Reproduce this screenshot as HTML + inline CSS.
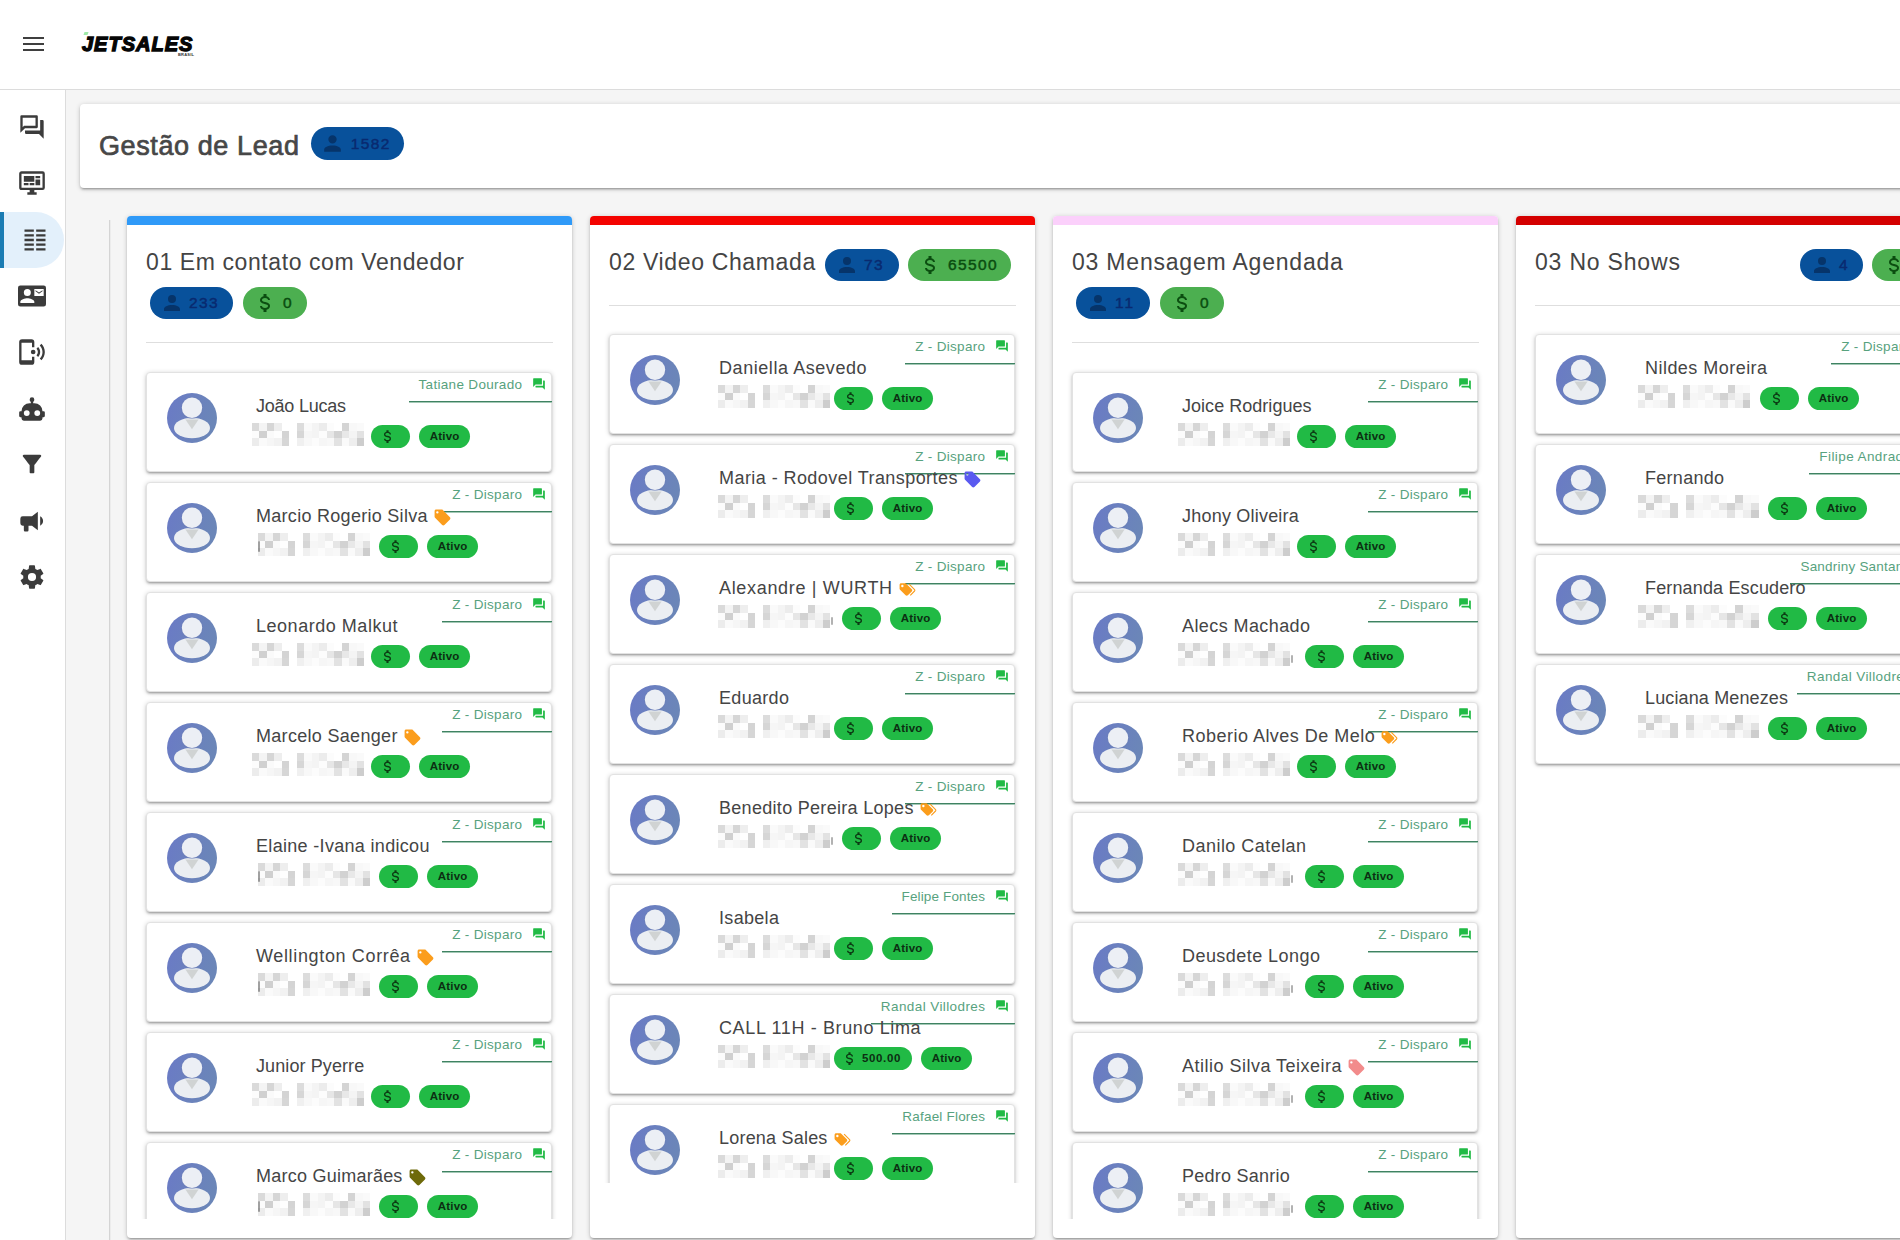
<!DOCTYPE html>
<html lang="pt-BR"><head><meta charset="utf-8"><title>Gestão de Lead</title>
<style>
*{box-sizing:border-box}
html,body{margin:0;padding:0;width:1900px;height:1240px;overflow:hidden}
body{background:#f5f5f5;font-family:"Liberation Sans",sans-serif;color:#444}
#app{position:absolute;left:0;top:0;width:1900px;height:1240px;overflow:hidden;background:#f5f5f5}
.ic{display:block;flex:none;fill:currentColor}
#hdr{position:absolute;left:0;top:0;width:1900px;height:90px;background:#fff;border-bottom:1px solid #dcdcdc}
#menu{position:absolute;left:23px;top:37px;width:21px;height:15px}
#menu i{position:absolute;left:0;width:21px;height:2px;background:#3f3f3f}
#logo{position:absolute;left:82px;top:30px;height:28px;font:italic bold 20px/28px "Liberation Sans",sans-serif;color:#060606;letter-spacing:1.0px;-webkit-text-stroke:1.3px #060606;white-space:nowrap}
#logo2{position:absolute;left:178px;top:53px;font:bold 4px/4px "Liberation Sans",sans-serif;color:#333;letter-spacing:.2px}
#logodot{position:absolute;left:84px;top:32px;width:4px;height:3px;background:#7fe38a;transform:skewX(-20deg);opacity:.75}
#side{position:absolute;left:0;top:90px;width:66px;height:1150px;background:#fff;border-right:1px solid #dcdcdc}
#side .it{position:absolute;left:0;width:65px;height:56px}
#side .it svg{position:absolute;left:18px;top:14px}
#side .act{background:#e3f0fb;border-radius:0 28px 28px 0;border-left:4px solid #1b7cb3;width:64px}
#side .act svg{left:17px}
#tcard{position:absolute;left:80px;top:104px;width:1840px;height:84px;background:#fff;border-radius:4px;box-shadow:0 1px 5px rgba(0,0,0,.2),0 2px 2px rgba(0,0,0,.14),0 3px 1px -2px rgba(0,0,0,.12)}
#ttl{position:absolute;left:19px;top:22px;font:27px/40px "Liberation Sans",sans-serif;color:#474747;white-space:nowrap;-webkit-text-stroke:.7px #474747}
.bd{position:absolute;height:32px;border-radius:16px;display:flex;align-items:center;white-space:nowrap;font-size:15.5px;line-height:32px}
.bd.b{background:#08519b;color:#092a70;-webkit-text-stroke:.45px #092a70}
.bd.g{background:#4caf50;color:#0a4d0f;-webkit-text-stroke:.45px #0a4d0f}
#vline{position:absolute;left:109px;top:220px;width:1px;height:1020px;background:#d4d4d4;box-shadow:1px 0 0 #ececec}
.col{position:absolute;top:216px;width:445px;height:1022px;background:#fff;border-radius:4px;box-shadow:0 1px 5px rgba(0,0,0,.2),0 2px 2px rgba(0,0,0,.14),0 3px 1px -2px rgba(0,0,0,.12);overflow:hidden}
.col .bar{position:absolute;left:0;top:0;width:100%;height:9px}
.col .ct{position:absolute;left:19px;top:27px;font-size:23px;line-height:38px;color:#444;white-space:nowrap}
.col .hr{position:absolute;left:19px;width:407px;height:1px;background:#dedede}
.list{position:absolute;left:0;width:445px;overflow:hidden}
.card{position:absolute;left:19px;width:406px;height:100px;background:#fff;border:1px solid #e2e2e2;border-radius:4px;box-shadow:0 1px 5px rgba(0,0,0,.2),0 2px 2px rgba(0,0,0,.14),0 3px 1px -2px rgba(0,0,0,.12)}
.av{position:absolute;left:20px;top:20px;width:50px;height:50px}
.nm{position:absolute;left:109px;top:21px;font-size:18px;line-height:24px;color:#454545;white-space:nowrap;display:flex;align-items:center;z-index:2}
.nm svg{margin-left:5.5px;margin-top:2px}
.ow{position:absolute;right:-1px;top:-1px;height:31px;padding:0 6px 6px 10px;background:linear-gradient(#3f8262,#3f8262 50%,#a3c9b6 50%) left bottom/100% 2px no-repeat;font-size:13.5px;line-height:23px;color:#57a27e;white-space:nowrap;display:flex;align-items:center}
.ow svg{margin-left:10px;margin-top:-1px}
.ph{position:absolute;left:105px;top:50px;width:112px;height:23px}
.mk{position:absolute;top:58px;width:2px;height:11px;background:#555;opacity:.55;border-radius:1px}
.pl{position:absolute;top:52px;height:23px;border-radius:12px;background:#21ba45;display:flex;align-items:center;font:bold 11.5px/23px "Liberation Sans",sans-serif;color:#0c2e12;white-space:nowrap}
</style></head><body><div id="app">
<svg width="0" height="0" style="position:absolute"><defs><linearGradient id="ag" x1="0" x2="1" y1="0" y2="0.3"><stop offset="0" stop-color="#6a7ac6"/><stop offset="1" stop-color="#6b86b8"/></linearGradient><symbol id="i-menu" viewBox="0 0 24 24"><path d="M3,6H21V8H3V6M3,11H21V13H3V11M3,16H21V18H3V16Z"/></symbol><symbol id="i-forum_o" viewBox="0 0 24 24"><path d="M15,4V11H5.17L4,12.17V4H15M16,2H3A1,1 0 0,0 2,3V17L6,13H16A1,1 0 0,0 17,12V3A1,1 0 0,0 16,2M21,6H19V15H6V17A1,1 0 0,0 7,18H18L22,22V7A1,1 0 0,0 21,6Z"/></symbol><symbol id="i-forum" viewBox="0 0 24 24"><path d="M17,12V3A1,1 0 0,0 16,2H3A1,1 0 0,0 2,3V17L6,13H16A1,1 0 0,0 17,12M21,6H19V15H6V17A1,1 0 0,0 7,18H18L22,22V7A1,1 0 0,0 21,6Z"/></symbol><symbol id="i-monitor" viewBox="0 0 24 24"><path d="M21,16V4H3V16H21M21,2A2,2 0 0,1 23,4V16A2,2 0 0,1 21,18H14V20H16V22H8V20H10V18H3C1.89,18 1,17.1 1,16V4C1,2.89 1.89,2 3,2H21M5,6H14V11H5V6M15,6H19V8H15V6M19,9V14H15V9H19M5,12H9V14H5V12M10,12H14V14H10V12Z"/></symbol><symbol id="i-columns" viewBox="0 0 24 24"><path d="M3,3H11V5H3V3M13,3H21V5H13V3M3,7H11V9H3V7M13,7H21V9H13V7M3,11H11V13H3V11M13,11H21V13H13V11M3,15H11V17H3V15M13,15H21V17H13V15M3,19H11V21H3V19M13,19H21V21H13V19Z"/></symbol><symbol id="i-cardmail" viewBox="0 0 24 24"><path d="M21,8V7L18,9L15,7V8L18,10M22,3H2A2,2 0 0,0 0,5V19A2,2 0 0,0 2,21H22A2,2 0 0,0 24,19V5A2,2 0 0,0 22,3M8,6A3,3 0 0,1 11,9A3,3 0 0,1 8,12A3,3 0 0,1 5,9A3,3 0 0,1 8,6M14,18H2V17C2,15 6,13.9 8,13.9C10,13.9 14,15 14,17M22,12H14V6H22"/></symbol><symbol id="i-cellwifi" viewBox="0 0 24 24"><path d="M20.07,4.93C21.88,6.74 23,9.24 23,12C23,14.76 21.88,17.26 20.07,19.07L18.66,17.66C20.11,16.22 21,14.22 21,12C21,9.79 20.11,7.78 18.66,6.34L20.07,4.93M17.24,7.76C18.33,8.85 19,10.35 19,12C19,13.65 18.33,15.15 17.24,16.24L15.83,14.83C16.55,14.11 17,13.11 17,12C17,10.89 16.55,9.89 15.83,9.17L17.24,7.76M13,10A2,2 0 0,1 15,12A2,2 0 0,1 13,14A2,2 0 0,1 11,12A2,2 0 0,1 13,10M11.5,1A2.5,2.5 0 0,1 14,3.5V8H12V4H3V19H12V16H14V20.5A2.5,2.5 0 0,1 11.5,23H3.5A2.5,2.5 0 0,1 1,20.5V3.5A2.5,2.5 0 0,1 3.5,1H11.5Z"/></symbol><symbol id="i-robot" viewBox="0 0 24 24"><path d="M12,2A2,2 0 0,1 14,4C14,4.74 13.6,5.39 13,5.73V7H14A7,7 0 0,1 21,14H22A1,1 0 0,1 23,15V18A1,1 0 0,1 22,19H21V20A2,2 0 0,1 19,22H5A2,2 0 0,1 3,20V19H2A1,1 0 0,1 1,18V15A1,1 0 0,1 2,14H3A7,7 0 0,1 10,7H11V5.73C10.4,5.39 10,4.74 10,4A2,2 0 0,1 12,2M7.5,13A2.5,2.5 0 0,0 5,15.5A2.5,2.5 0 0,0 7.5,18A2.5,2.5 0 0,0 10,15.5A2.5,2.5 0 0,0 7.5,13M16.5,13A2.5,2.5 0 0,0 14,15.5A2.5,2.5 0 0,0 16.5,18A2.5,2.5 0 0,0 19,15.5A2.5,2.5 0 0,0 16.5,13Z"/></symbol><symbol id="i-filter" viewBox="0 0 24 24"><path d="M4.25,5.61C6.27,8.2 10,13 10,13v6c0,0.55 0.45,1 1,1h2c0.55,0 1,-0.45 1,-1v-6c0,0 3.72,-4.8 5.74,-7.39C20.25,4.95 19.78,4 18.95,4H5.04C4.21,4 3.74,4.95 4.25,5.61z"/></symbol><symbol id="i-bullhorn" viewBox="0 0 24 24"><path d="M12,8H4A2,2 0 0,0 2,10V14A2,2 0 0,0 4,16H5V20A1,1 0 0,0 6,21H8A1,1 0 0,0 9,20V16H12L17,20V4L12,8M21.5,12C21.5,13.71 20.54,15.26 19,16V8C20.53,8.75 21.5,10.3 21.5,12Z"/></symbol><symbol id="i-cog" viewBox="0 0 24 24"><path d="M12,15.5A3.5,3.5 0 0,1 8.5,12A3.5,3.5 0 0,1 12,8.5A3.5,3.5 0 0,1 15.5,12A3.5,3.5 0 0,1 12,15.5M19.43,12.97C19.47,12.65 19.5,12.33 19.5,12C19.5,11.67 19.47,11.34 19.43,11L21.54,9.37C21.73,9.22 21.78,8.95 21.66,8.73L19.66,5.27C19.54,5.05 19.27,4.96 19.05,5.05L16.56,6.05C16.04,5.66 15.5,5.32 14.87,5.07L14.5,2.42C14.46,2.18 14.25,2 14,2H10C9.75,2 9.54,2.18 9.5,2.42L9.13,5.07C8.5,5.32 7.96,5.66 7.44,6.05L4.95,5.05C4.73,4.96 4.46,5.05 4.34,5.27L2.34,8.73C2.21,8.95 2.27,9.22 2.46,9.37L4.57,11C4.53,11.34 4.5,11.67 4.5,12C4.5,12.33 4.53,12.65 4.57,12.97L2.46,14.63C2.27,14.78 2.21,15.05 2.34,15.27L4.34,18.73C4.46,18.95 4.73,19.03 4.95,18.95L7.44,17.94C7.96,18.34 8.5,18.68 9.13,18.93L9.5,21.58C9.54,21.82 9.75,22 10,22H14C14.25,22 14.46,21.82 14.5,21.58L14.87,18.93C15.5,18.67 16.04,18.34 16.56,17.94L19.05,18.95C19.27,19.03 19.54,18.95 19.66,18.73L21.66,15.27C21.78,15.05 21.73,14.78 21.54,14.63L19.43,12.97Z"/></symbol><symbol id="i-account" viewBox="0 0 24 24"><path d="M12,4A4,4 0 0,1 16,8A4,4 0 0,1 12,12A4,4 0 0,1 8,8A4,4 0 0,1 12,4M12,14C16.42,14 20,15.79 20,18V20H4V18C4,15.79 7.58,14 12,14Z"/></symbol><symbol id="i-usd" viewBox="0 0 24 24"><path d="M7,15H9C9,16.08 10.37,17 12,17C13.63,17 15,16.08 15,15C15,13.9 13.96,13.5 11.76,12.97C9.64,12.44 7,11.78 7,9C7,7.21 8.47,5.69 10.5,5.18V3H13.5V5.18C15.53,5.69 17,7.21 17,9H15C15,7.92 13.63,7 12,7C10.37,7 9,7.92 9,9C9,10.1 10.04,10.5 12.24,11.03C14.36,11.56 17,12.22 17,15C17,16.79 15.53,18.31 13.5,18.82V21H10.5V18.82C8.47,18.31 7,16.79 7,15Z"/></symbol><symbol id="i-tag" viewBox="0 0 24 24"><path d="M5.5,7A1.5,1.5 0 0,1 4,5.5A1.5,1.5 0 0,1 5.5,4A1.5,1.5 0 0,1 7,5.5A1.5,1.5 0 0,1 5.5,7M21.41,11.58L12.41,2.58C12.05,2.22 11.55,2 11,2H4C2.89,2 2,2.89 2,4V11C2,11.55 2.22,12.05 2.59,12.41L11.58,21.41C11.95,21.77 12.45,22 13,22C13.55,22 14.05,21.77 14.41,21.41L21.41,14.41C21.78,14.05 22,13.55 22,13C22,12.44 21.77,11.94 21.41,11.58Z"/></symbol><symbol id="i-tags" viewBox="0 0 24 24"><path d="M5.5,9A1.5,1.5 0 0,0 7,7.5A1.5,1.5 0 0,0 5.5,6A1.5,1.5 0 0,0 4,7.5A1.5,1.5 0 0,0 5.5,9M17.41,11.58C17.77,11.94 18,12.44 18,13C18,13.55 17.78,14.05 17.41,14.41L12.41,19.41C12.05,19.77 11.55,20 11,20C10.45,20 9.95,19.78 9.58,19.41L2.59,12.42C2.22,12.05 2,11.55 2,11V6C2,4.89 2.89,4 4,4H9C9.55,4 10.05,4.22 10.41,4.58L17.41,11.58M13.54,5.71L14.54,4.71L21.41,11.58C21.78,11.94 22,12.45 22,13C22,13.55 21.78,14.05 21.42,14.41L16.04,19.79L15.04,18.79L20.75,13L13.54,5.71Z"/></symbol><symbol id="avatar" viewBox="0 0 50 50"><circle cx="25" cy="25" r="25" fill="url(#ag)"/><ellipse cx="25" cy="35" rx="18" ry="10.2" fill="#ebeef2"/><path d="M18.4 26.6 L31.6 26.6 L25 36.3Z" fill="#d0d3d3"/><circle cx="25" cy="15" r="11" fill="#6d7fb6" opacity=".55"/><circle cx="25" cy="14.8" r="10.2" fill="#eceff5"/></symbol><symbol id="phone" viewBox="0 0 112 23" preserveAspectRatio="none"><rect x="0.00" y="0.00" width="7.5" height="7.7" fill="#dadada"/><rect x="7.47" y="0.00" width="7.5" height="7.7" fill="#f4f4f4"/><rect x="14.93" y="0.00" width="7.5" height="7.7" fill="#d6d6d6"/><rect x="22.40" y="0.00" width="7.5" height="7.7" fill="#eeeeee"/><rect x="44.80" y="0.00" width="7.5" height="7.7" fill="#dcdcdc"/><rect x="52.27" y="0.00" width="7.5" height="7.7" fill="#fafafa"/><rect x="59.74" y="0.00" width="7.5" height="7.7" fill="#f4f4f4"/><rect x="67.20" y="0.00" width="7.5" height="7.7" fill="#ececec"/><rect x="74.67" y="0.00" width="7.5" height="7.7" fill="#fcfcfc"/><rect x="89.60" y="0.00" width="7.5" height="7.7" fill="#d4d4d4"/><rect x="97.07" y="0.00" width="7.5" height="7.7" fill="#f8f8f8"/><rect x="104.54" y="0.00" width="7.5" height="7.7" fill="#fafafa"/><rect x="0.00" y="7.67" width="7.5" height="7.7" fill="#fcfcfc"/><rect x="7.47" y="7.67" width="7.5" height="7.7" fill="#d0d0d0"/><rect x="14.93" y="7.67" width="7.5" height="7.7" fill="#fafafa"/><rect x="22.40" y="7.67" width="7.5" height="7.7" fill="#fefefe"/><rect x="29.87" y="7.67" width="7.5" height="7.7" fill="#d4d4d4"/><rect x="44.80" y="7.67" width="7.5" height="7.7" fill="#d6d6d6"/><rect x="52.27" y="7.67" width="7.5" height="7.7" fill="#f6f6f6"/><rect x="59.74" y="7.67" width="7.5" height="7.7" fill="#f4f4f4"/><rect x="67.20" y="7.67" width="7.5" height="7.7" fill="#fcfcfc"/><rect x="74.67" y="7.67" width="7.5" height="7.7" fill="#e6e6e6"/><rect x="82.14" y="7.67" width="7.5" height="7.7" fill="#d2d2d2"/><rect x="89.60" y="7.67" width="7.5" height="7.7" fill="#e8e8e8"/><rect x="97.07" y="7.67" width="7.5" height="7.7" fill="#f4f4f4"/><rect x="104.54" y="7.67" width="7.5" height="7.7" fill="#e2e2e2"/><rect x="0.00" y="15.34" width="7.5" height="7.7" fill="#ececec"/><rect x="7.47" y="15.34" width="7.5" height="7.7" fill="#fafafa"/><rect x="14.93" y="15.34" width="7.5" height="7.7" fill="#f6f6f6"/><rect x="22.40" y="15.34" width="7.5" height="7.7" fill="#f2f2f2"/><rect x="29.87" y="15.34" width="7.5" height="7.7" fill="#d6d6d6"/><rect x="44.80" y="15.34" width="7.5" height="7.7" fill="#f0f0f0"/><rect x="52.27" y="15.34" width="7.5" height="7.7" fill="#f8f8f8"/><rect x="59.74" y="15.34" width="7.5" height="7.7" fill="#fcfcfc"/><rect x="67.20" y="15.34" width="7.5" height="7.7" fill="#f6f6f6"/><rect x="74.67" y="15.34" width="7.5" height="7.7" fill="#f8f8f8"/><rect x="82.14" y="15.34" width="7.5" height="7.7" fill="#e2e2e2"/><rect x="89.60" y="15.34" width="7.5" height="7.7" fill="#fafafa"/><rect x="97.07" y="15.34" width="7.5" height="7.7" fill="#eeeeee"/><rect x="104.54" y="15.34" width="7.5" height="7.7" fill="#cdcdcd"/></symbol></defs></svg>
<div id="hdr"><div id="menu"><i style="top:0"></i><i style="top:6px"></i><i style="top:12px;height:2.4px"></i></div>
<div id="logodot"></div><div id="logo">JETSALES</div><div id="logo2">BRASIL</div></div>
<div id="side"><div class="it" style="top:9px"><svg class="ic" width="28" height="28" style="color:#3b3b3b;"><use href="#i-forum_o"/></svg></div><div class="it" style="top:65px"><svg class="ic" width="28" height="28" style="color:#3b3b3b;"><use href="#i-monitor"/></svg></div><div class="it act" style="top:122px"><svg class="ic" width="28" height="28" style="color:#3b3b3b;"><use href="#i-columns"/></svg></div><div class="it" style="top:178px"><svg class="ic" width="28" height="28" style="color:#3b3b3b;"><use href="#i-cardmail"/></svg></div><div class="it" style="top:234px"><svg class="ic" width="28" height="28" style="color:#3b3b3b;"><use href="#i-cellwifi"/></svg></div><div class="it" style="top:291px"><svg class="ic" width="28" height="28" style="color:#3b3b3b;"><use href="#i-robot"/></svg></div><div class="it" style="top:346px"><svg class="ic" width="28" height="28" style="color:#3b3b3b;"><use href="#i-filter"/></svg></div><div class="it" style="top:403px"><svg class="ic" width="28" height="28" style="color:#3b3b3b;"><use href="#i-bullhorn"/></svg></div><div class="it" style="top:459px"><svg class="ic" width="28" height="28" style="color:#3b3b3b;"><use href="#i-cog"/></svg></div></div>
<div id="tcard"><div id="ttl"><span style="letter-spacing:0.599px;margin-right:-0.599px">Gestão de Lead</span></div>
<div class="bd b" style="left:231px;top:23px;width:93px;height:33px;border-radius:17px;padding-left:8.8px"><svg class="ic" width="25" height="25" style="color:#06346a;"><use href="#i-account"/></svg><span style="margin-left:6px"><span style="letter-spacing:1.365px;margin-right:-1.365px">1582</span></span></div></div>
<div id="vline"></div>
<div class="col" style="left:127px"><div class="bar" style="background:#2f9af8"></div><div class="ct"><span style="letter-spacing:0.594px;margin-right:-0.594px">01 Em contato com Vendedor</span></div><div class="bd b" style="left:23px;top:71px;width:83px;padding-left:9.7px"><svg class="ic" width="24" height="24" style="color:#06346a;"><use href="#i-account"/></svg><span style="margin-left:5.3px"><span style="letter-spacing:1.363px;margin-right:-1.363px">233</span></span></div><div class="bd g" style="left:116px;top:71px;width:64px;padding-left:9.7px"><svg class="ic" width="24" height="24" style="color:#0b4d10;"><use href="#i-usd"/></svg><span style="margin-left:6.3px"><span style="letter-spacing:1.369px;margin-right:-1.369px">0</span></span></div><div class="hr" style="top:126px"></div><div class="list" style="top:152px;height:851px"><div class="card" style="top:4px"><svg class="av"><use href="#avatar"/></svg><div class="ow"><span style="letter-spacing:0.314px;margin-right:-0.314px">Tatiane Dourado</span><svg class="ic" width="14" height="14" style="color:#21ba45;"><use href="#i-forum"/></svg></div><div class="nm"><span style="letter-spacing:-0.218px;margin-right:0.218px">João Lucas</span></div><svg class="ph" style="left:105px;width:112px" shape-rendering="crispEdges"><use href="#phone"/></svg><div class="pl" style="left:224px;width:39px;padding-left:7.7px"><svg class="ic" width="17" height="17" style="color:#0c3d14;"><use href="#i-usd"/></svg></div><div class="pl" style="left:272px;width:51px;justify-content:center"><span style="letter-spacing:0.191px;margin-right:-0.191px">Ativo</span></div></div><div class="card" style="top:114px"><svg class="av"><use href="#avatar"/></svg><div class="ow"><span style="letter-spacing:0.301px;margin-right:-0.301px">Z - Disparo</span><svg class="ic" width="14" height="14" style="color:#21ba45;"><use href="#i-forum"/></svg></div><div class="nm"><span style="letter-spacing:0.285px;margin-right:-0.285px">Marcio Rogerio Silva</span><svg class="ic" width="19" height="19" style="color:#fb9d1c;"><use href="#i-tag"/></svg></div><svg class="ph" style="left:111px;width:112px" shape-rendering="crispEdges"><use href="#phone"/></svg><i class="mk" style="left:111px"></i><div class="pl" style="left:232px;width:39px;padding-left:7.7px"><svg class="ic" width="17" height="17" style="color:#0c3d14;"><use href="#i-usd"/></svg></div><div class="pl" style="left:280px;width:51px;justify-content:center"><span style="letter-spacing:0.191px;margin-right:-0.191px">Ativo</span></div></div><div class="card" style="top:224px"><svg class="av"><use href="#avatar"/></svg><div class="ow"><span style="letter-spacing:0.301px;margin-right:-0.301px">Z - Disparo</span><svg class="ic" width="14" height="14" style="color:#21ba45;"><use href="#i-forum"/></svg></div><div class="nm"><span style="letter-spacing:0.529px;margin-right:-0.529px">Leonardo Malkut</span></div><svg class="ph" style="left:105px;width:112px" shape-rendering="crispEdges"><use href="#phone"/></svg><div class="pl" style="left:224px;width:39px;padding-left:7.7px"><svg class="ic" width="17" height="17" style="color:#0c3d14;"><use href="#i-usd"/></svg></div><div class="pl" style="left:272px;width:51px;justify-content:center"><span style="letter-spacing:0.191px;margin-right:-0.191px">Ativo</span></div></div><div class="card" style="top:334px"><svg class="av"><use href="#avatar"/></svg><div class="ow"><span style="letter-spacing:0.301px;margin-right:-0.301px">Z - Disparo</span><svg class="ic" width="14" height="14" style="color:#21ba45;"><use href="#i-forum"/></svg></div><div class="nm"><span style="letter-spacing:0.308px;margin-right:-0.308px">Marcelo Saenger</span><svg class="ic" width="19" height="19" style="color:#fb9d1c;"><use href="#i-tag"/></svg></div><svg class="ph" style="left:105px;width:112px" shape-rendering="crispEdges"><use href="#phone"/></svg><div class="pl" style="left:224px;width:39px;padding-left:7.7px"><svg class="ic" width="17" height="17" style="color:#0c3d14;"><use href="#i-usd"/></svg></div><div class="pl" style="left:272px;width:51px;justify-content:center"><span style="letter-spacing:0.191px;margin-right:-0.191px">Ativo</span></div></div><div class="card" style="top:444px"><svg class="av"><use href="#avatar"/></svg><div class="ow"><span style="letter-spacing:0.301px;margin-right:-0.301px">Z - Disparo</span><svg class="ic" width="14" height="14" style="color:#21ba45;"><use href="#i-forum"/></svg></div><div class="nm"><span style="letter-spacing:0.317px;margin-right:-0.317px">Elaine -Ivana indicou</span></div><svg class="ph" style="left:111px;width:112px" shape-rendering="crispEdges"><use href="#phone"/></svg><i class="mk" style="left:111px"></i><div class="pl" style="left:232px;width:39px;padding-left:7.7px"><svg class="ic" width="17" height="17" style="color:#0c3d14;"><use href="#i-usd"/></svg></div><div class="pl" style="left:280px;width:51px;justify-content:center"><span style="letter-spacing:0.191px;margin-right:-0.191px">Ativo</span></div></div><div class="card" style="top:554px"><svg class="av"><use href="#avatar"/></svg><div class="ow"><span style="letter-spacing:0.301px;margin-right:-0.301px">Z - Disparo</span><svg class="ic" width="14" height="14" style="color:#21ba45;"><use href="#i-forum"/></svg></div><div class="nm"><span style="letter-spacing:0.649px;margin-right:-0.649px">Wellington Corrêa</span><svg class="ic" width="19" height="19" style="color:#fb9d1c;"><use href="#i-tag"/></svg></div><svg class="ph" style="left:111px;width:112px" shape-rendering="crispEdges"><use href="#phone"/></svg><i class="mk" style="left:111px"></i><div class="pl" style="left:232px;width:39px;padding-left:7.7px"><svg class="ic" width="17" height="17" style="color:#0c3d14;"><use href="#i-usd"/></svg></div><div class="pl" style="left:280px;width:51px;justify-content:center"><span style="letter-spacing:0.191px;margin-right:-0.191px">Ativo</span></div></div><div class="card" style="top:664px"><svg class="av"><use href="#avatar"/></svg><div class="ow"><span style="letter-spacing:0.301px;margin-right:-0.301px">Z - Disparo</span><svg class="ic" width="14" height="14" style="color:#21ba45;"><use href="#i-forum"/></svg></div><div class="nm"><span style="letter-spacing:0.098px;margin-right:-0.098px">Junior Pyerre</span></div><svg class="ph" style="left:105px;width:112px" shape-rendering="crispEdges"><use href="#phone"/></svg><div class="pl" style="left:224px;width:39px;padding-left:7.7px"><svg class="ic" width="17" height="17" style="color:#0c3d14;"><use href="#i-usd"/></svg></div><div class="pl" style="left:272px;width:51px;justify-content:center"><span style="letter-spacing:0.191px;margin-right:-0.191px">Ativo</span></div></div><div class="card" style="top:774px"><svg class="av"><use href="#avatar"/></svg><div class="ow"><span style="letter-spacing:0.301px;margin-right:-0.301px">Z - Disparo</span><svg class="ic" width="14" height="14" style="color:#21ba45;"><use href="#i-forum"/></svg></div><div class="nm"><span style="letter-spacing:0.238px;margin-right:-0.238px">Marco Guimarães</span><svg class="ic" width="19" height="19" style="color:#6e6a0a;"><use href="#i-tag"/></svg></div><svg class="ph" style="left:111px;width:112px" shape-rendering="crispEdges"><use href="#phone"/></svg><i class="mk" style="left:111px"></i><div class="pl" style="left:232px;width:39px;padding-left:7.7px"><svg class="ic" width="17" height="17" style="color:#0c3d14;"><use href="#i-usd"/></svg></div><div class="pl" style="left:280px;width:51px;justify-content:center"><span style="letter-spacing:0.191px;margin-right:-0.191px">Ativo</span></div></div></div></div><div class="col" style="left:590px"><div class="bar" style="background:#f40300"></div><div class="ct"><span style="letter-spacing:0.653px;margin-right:-0.653px">02 Video Chamada</span></div><div class="bd g" style="left:318px;top:33px;width:103px;padding-left:9.7px"><svg class="ic" width="24" height="24" style="color:#0b4d10;"><use href="#i-usd"/></svg><span style="margin-left:6.3px"><span style="letter-spacing:1.365px;margin-right:-1.365px">65500</span></span></div><div class="bd b" style="left:235px;top:33px;width:74px;padding-left:9.7px"><svg class="ic" width="24" height="24" style="color:#06346a;"><use href="#i-account"/></svg><span style="margin-left:5.3px"><span style="letter-spacing:1.361px;margin-right:-1.361px">73</span></span></div><div class="hr" style="top:89px"></div><div class="list" style="top:114px;height:853px"><div class="card" style="top:4px"><svg class="av"><use href="#avatar"/></svg><div class="ow"><span style="letter-spacing:0.301px;margin-right:-0.301px">Z - Disparo</span><svg class="ic" width="14" height="14" style="color:#21ba45;"><use href="#i-forum"/></svg></div><div class="nm"><span style="letter-spacing:0.566px;margin-right:-0.566px">Daniella Asevedo</span></div><svg class="ph" style="left:108px;width:112px" shape-rendering="crispEdges"><use href="#phone"/></svg><div class="pl" style="left:224px;width:39px;padding-left:7.7px"><svg class="ic" width="17" height="17" style="color:#0c3d14;"><use href="#i-usd"/></svg></div><div class="pl" style="left:272px;width:51px;justify-content:center"><span style="letter-spacing:0.191px;margin-right:-0.191px">Ativo</span></div></div><div class="card" style="top:114px"><svg class="av"><use href="#avatar"/></svg><div class="ow"><span style="letter-spacing:0.301px;margin-right:-0.301px">Z - Disparo</span><svg class="ic" width="14" height="14" style="color:#21ba45;"><use href="#i-forum"/></svg></div><div class="nm"><span style="letter-spacing:0.436px;margin-right:-0.436px">Maria - Rodovel Transportes</span><svg class="ic" width="19" height="19" style="color:#5a5af0;"><use href="#i-tag"/></svg></div><svg class="ph" style="left:108px;width:112px" shape-rendering="crispEdges"><use href="#phone"/></svg><div class="pl" style="left:224px;width:39px;padding-left:7.7px"><svg class="ic" width="17" height="17" style="color:#0c3d14;"><use href="#i-usd"/></svg></div><div class="pl" style="left:272px;width:51px;justify-content:center"><span style="letter-spacing:0.191px;margin-right:-0.191px">Ativo</span></div></div><div class="card" style="top:224px"><svg class="av"><use href="#avatar"/></svg><div class="ow"><span style="letter-spacing:0.301px;margin-right:-0.301px">Z - Disparo</span><svg class="ic" width="14" height="14" style="color:#21ba45;"><use href="#i-forum"/></svg></div><div class="nm"><span style="letter-spacing:0.670px;margin-right:-0.670px">Alexandre | WURTH</span><svg class="ic" width="19" height="19" style="color:#fb9d1c;"><use href="#i-tags"/></svg></div><svg class="ph" style="left:108px;width:112px" shape-rendering="crispEdges"><use href="#phone"/></svg><i class="mk" style="left:221px;top:62px;height:8px;opacity:.45"></i><div class="pl" style="left:232px;width:39px;padding-left:7.7px"><svg class="ic" width="17" height="17" style="color:#0c3d14;"><use href="#i-usd"/></svg></div><div class="pl" style="left:280px;width:51px;justify-content:center"><span style="letter-spacing:0.191px;margin-right:-0.191px">Ativo</span></div></div><div class="card" style="top:334px"><svg class="av"><use href="#avatar"/></svg><div class="ow"><span style="letter-spacing:0.301px;margin-right:-0.301px">Z - Disparo</span><svg class="ic" width="14" height="14" style="color:#21ba45;"><use href="#i-forum"/></svg></div><div class="nm"><span style="letter-spacing:0.318px;margin-right:-0.318px">Eduardo</span></div><svg class="ph" style="left:108px;width:112px" shape-rendering="crispEdges"><use href="#phone"/></svg><div class="pl" style="left:224px;width:39px;padding-left:7.7px"><svg class="ic" width="17" height="17" style="color:#0c3d14;"><use href="#i-usd"/></svg></div><div class="pl" style="left:272px;width:51px;justify-content:center"><span style="letter-spacing:0.191px;margin-right:-0.191px">Ativo</span></div></div><div class="card" style="top:444px"><svg class="av"><use href="#avatar"/></svg><div class="ow"><span style="letter-spacing:0.301px;margin-right:-0.301px">Z - Disparo</span><svg class="ic" width="14" height="14" style="color:#21ba45;"><use href="#i-forum"/></svg></div><div class="nm"><span style="letter-spacing:0.299px;margin-right:-0.299px">Benedito Pereira Lopes</span><svg class="ic" width="19" height="19" style="color:#fb9d1c;"><use href="#i-tags"/></svg></div><svg class="ph" style="left:108px;width:112px" shape-rendering="crispEdges"><use href="#phone"/></svg><i class="mk" style="left:221px;top:62px;height:8px;opacity:.45"></i><div class="pl" style="left:232px;width:39px;padding-left:7.7px"><svg class="ic" width="17" height="17" style="color:#0c3d14;"><use href="#i-usd"/></svg></div><div class="pl" style="left:280px;width:51px;justify-content:center"><span style="letter-spacing:0.191px;margin-right:-0.191px">Ativo</span></div></div><div class="card" style="top:554px"><svg class="av"><use href="#avatar"/></svg><div class="ow"><span style="letter-spacing:0.141px;margin-right:-0.141px">Felipe Fontes</span><svg class="ic" width="14" height="14" style="color:#21ba45;"><use href="#i-forum"/></svg></div><div class="nm"><span style="letter-spacing:0.315px;margin-right:-0.315px">Isabela</span></div><svg class="ph" style="left:108px;width:112px" shape-rendering="crispEdges"><use href="#phone"/></svg><div class="pl" style="left:224px;width:39px;padding-left:7.7px"><svg class="ic" width="17" height="17" style="color:#0c3d14;"><use href="#i-usd"/></svg></div><div class="pl" style="left:272px;width:51px;justify-content:center"><span style="letter-spacing:0.191px;margin-right:-0.191px">Ativo</span></div></div><div class="card" style="top:664px"><svg class="av"><use href="#avatar"/></svg><div class="ow"><span style="letter-spacing:0.405px;margin-right:-0.405px">Randal Villodres</span><svg class="ic" width="14" height="14" style="color:#21ba45;"><use href="#i-forum"/></svg></div><div class="nm"><span style="letter-spacing:0.622px;margin-right:-0.622px">CALL 11H - Bruno Lima</span></div><svg class="ph" style="left:108px;width:112px" shape-rendering="crispEdges"><use href="#phone"/></svg><div class="pl" style="left:224px;width:78px;padding-left:7px"><svg class="ic" width="17" height="17" style="color:#0c3d14;"><use href="#i-usd"/></svg><span style="margin-left:4px"><span style="letter-spacing:0.633px;margin-right:-0.633px">500.00</span></span></div><div class="pl" style="left:311px;width:51px;justify-content:center"><span style="letter-spacing:0.191px;margin-right:-0.191px">Ativo</span></div></div><div class="card" style="top:774px"><svg class="av"><use href="#avatar"/></svg><div class="ow"><span style="letter-spacing:0.198px;margin-right:-0.198px">Rafael Flores</span><svg class="ic" width="14" height="14" style="color:#21ba45;"><use href="#i-forum"/></svg></div><div class="nm"><span style="letter-spacing:0.208px;margin-right:-0.208px">Lorena Sales</span><svg class="ic" width="19" height="19" style="color:#fb9d1c;"><use href="#i-tags"/></svg></div><svg class="ph" style="left:108px;width:112px" shape-rendering="crispEdges"><use href="#phone"/></svg><div class="pl" style="left:224px;width:39px;padding-left:7.7px"><svg class="ic" width="17" height="17" style="color:#0c3d14;"><use href="#i-usd"/></svg></div><div class="pl" style="left:272px;width:51px;justify-content:center"><span style="letter-spacing:0.191px;margin-right:-0.191px">Ativo</span></div></div></div></div><div class="col" style="left:1053px"><div class="bar" style="background:#fbd0fb"></div><div class="ct"><span style="letter-spacing:0.796px;margin-right:-0.796px">03 Mensagem Agendada</span></div><div class="bd b" style="left:23px;top:71px;width:74px;padding-left:9.7px"><svg class="ic" width="24" height="24" style="color:#06346a;"><use href="#i-account"/></svg><span style="margin-left:5.3px"><span style="letter-spacing:1.939px;margin-right:-1.939px">11</span></span></div><div class="bd g" style="left:107px;top:71px;width:64px;padding-left:9.7px"><svg class="ic" width="24" height="24" style="color:#0b4d10;"><use href="#i-usd"/></svg><span style="margin-left:6.3px"><span style="letter-spacing:1.369px;margin-right:-1.369px">0</span></span></div><div class="hr" style="top:126px"></div><div class="list" style="top:152px;height:851px"><div class="card" style="top:4px"><svg class="av"><use href="#avatar"/></svg><div class="ow"><span style="letter-spacing:0.301px;margin-right:-0.301px">Z - Disparo</span><svg class="ic" width="14" height="14" style="color:#21ba45;"><use href="#i-forum"/></svg></div><div class="nm"><span style="letter-spacing:0.033px;margin-right:-0.033px">Joice Rodrigues</span></div><svg class="ph" style="left:105px;width:112px" shape-rendering="crispEdges"><use href="#phone"/></svg><div class="pl" style="left:224px;width:39px;padding-left:7.7px"><svg class="ic" width="17" height="17" style="color:#0c3d14;"><use href="#i-usd"/></svg></div><div class="pl" style="left:272px;width:51px;justify-content:center"><span style="letter-spacing:0.191px;margin-right:-0.191px">Ativo</span></div></div><div class="card" style="top:114px"><svg class="av"><use href="#avatar"/></svg><div class="ow"><span style="letter-spacing:0.301px;margin-right:-0.301px">Z - Disparo</span><svg class="ic" width="14" height="14" style="color:#21ba45;"><use href="#i-forum"/></svg></div><div class="nm"><span style="letter-spacing:0.212px;margin-right:-0.212px">Jhony Oliveira</span></div><svg class="ph" style="left:105px;width:112px" shape-rendering="crispEdges"><use href="#phone"/></svg><div class="pl" style="left:224px;width:39px;padding-left:7.7px"><svg class="ic" width="17" height="17" style="color:#0c3d14;"><use href="#i-usd"/></svg></div><div class="pl" style="left:272px;width:51px;justify-content:center"><span style="letter-spacing:0.191px;margin-right:-0.191px">Ativo</span></div></div><div class="card" style="top:224px"><svg class="av"><use href="#avatar"/></svg><div class="ow"><span style="letter-spacing:0.301px;margin-right:-0.301px">Z - Disparo</span><svg class="ic" width="14" height="14" style="color:#21ba45;"><use href="#i-forum"/></svg></div><div class="nm"><span style="letter-spacing:0.410px;margin-right:-0.410px">Alecs Machado</span></div><svg class="ph" style="left:105px;width:112px" shape-rendering="crispEdges"><use href="#phone"/></svg><i class="mk" style="left:218px;top:62px;height:8px;opacity:.45"></i><div class="pl" style="left:232px;width:39px;padding-left:7.7px"><svg class="ic" width="17" height="17" style="color:#0c3d14;"><use href="#i-usd"/></svg></div><div class="pl" style="left:280px;width:51px;justify-content:center"><span style="letter-spacing:0.191px;margin-right:-0.191px">Ativo</span></div></div><div class="card" style="top:334px"><svg class="av"><use href="#avatar"/></svg><div class="ow"><span style="letter-spacing:0.301px;margin-right:-0.301px">Z - Disparo</span><svg class="ic" width="14" height="14" style="color:#21ba45;"><use href="#i-forum"/></svg></div><div class="nm"><span style="letter-spacing:0.481px;margin-right:-0.481px">Roberio Alves De Melo</span><svg class="ic" width="19" height="19" style="color:#fb9d1c;"><use href="#i-tags"/></svg></div><svg class="ph" style="left:105px;width:112px" shape-rendering="crispEdges"><use href="#phone"/></svg><div class="pl" style="left:224px;width:39px;padding-left:7.7px"><svg class="ic" width="17" height="17" style="color:#0c3d14;"><use href="#i-usd"/></svg></div><div class="pl" style="left:272px;width:51px;justify-content:center"><span style="letter-spacing:0.191px;margin-right:-0.191px">Ativo</span></div></div><div class="card" style="top:444px"><svg class="av"><use href="#avatar"/></svg><div class="ow"><span style="letter-spacing:0.301px;margin-right:-0.301px">Z - Disparo</span><svg class="ic" width="14" height="14" style="color:#21ba45;"><use href="#i-forum"/></svg></div><div class="nm"><span style="letter-spacing:0.464px;margin-right:-0.464px">Danilo Catelan</span></div><svg class="ph" style="left:105px;width:112px" shape-rendering="crispEdges"><use href="#phone"/></svg><i class="mk" style="left:218px;top:62px;height:8px;opacity:.45"></i><div class="pl" style="left:232px;width:39px;padding-left:7.7px"><svg class="ic" width="17" height="17" style="color:#0c3d14;"><use href="#i-usd"/></svg></div><div class="pl" style="left:280px;width:51px;justify-content:center"><span style="letter-spacing:0.191px;margin-right:-0.191px">Ativo</span></div></div><div class="card" style="top:554px"><svg class="av"><use href="#avatar"/></svg><div class="ow"><span style="letter-spacing:0.301px;margin-right:-0.301px">Z - Disparo</span><svg class="ic" width="14" height="14" style="color:#21ba45;"><use href="#i-forum"/></svg></div><div class="nm"><span style="letter-spacing:0.447px;margin-right:-0.447px">Deusdete Longo</span></div><svg class="ph" style="left:105px;width:112px" shape-rendering="crispEdges"><use href="#phone"/></svg><i class="mk" style="left:218px;top:62px;height:8px;opacity:.45"></i><div class="pl" style="left:232px;width:39px;padding-left:7.7px"><svg class="ic" width="17" height="17" style="color:#0c3d14;"><use href="#i-usd"/></svg></div><div class="pl" style="left:280px;width:51px;justify-content:center"><span style="letter-spacing:0.191px;margin-right:-0.191px">Ativo</span></div></div><div class="card" style="top:664px"><svg class="av"><use href="#avatar"/></svg><div class="ow"><span style="letter-spacing:0.301px;margin-right:-0.301px">Z - Disparo</span><svg class="ic" width="14" height="14" style="color:#21ba45;"><use href="#i-forum"/></svg></div><div class="nm"><span style="letter-spacing:0.488px;margin-right:-0.488px">Atilio Silva Teixeira</span><svg class="ic" width="19" height="19" style="color:#f28b8b;"><use href="#i-tag"/></svg></div><svg class="ph" style="left:105px;width:112px" shape-rendering="crispEdges"><use href="#phone"/></svg><i class="mk" style="left:218px;top:62px;height:8px;opacity:.45"></i><div class="pl" style="left:232px;width:39px;padding-left:7.7px"><svg class="ic" width="17" height="17" style="color:#0c3d14;"><use href="#i-usd"/></svg></div><div class="pl" style="left:280px;width:51px;justify-content:center"><span style="letter-spacing:0.191px;margin-right:-0.191px">Ativo</span></div></div><div class="card" style="top:774px"><svg class="av"><use href="#avatar"/></svg><div class="ow"><span style="letter-spacing:0.301px;margin-right:-0.301px">Z - Disparo</span><svg class="ic" width="14" height="14" style="color:#21ba45;"><use href="#i-forum"/></svg></div><div class="nm"><span style="letter-spacing:0.241px;margin-right:-0.241px">Pedro Sanrio</span></div><svg class="ph" style="left:105px;width:112px" shape-rendering="crispEdges"><use href="#phone"/></svg><i class="mk" style="left:218px;top:62px;height:8px;opacity:.45"></i><div class="pl" style="left:232px;width:39px;padding-left:7.7px"><svg class="ic" width="17" height="17" style="color:#0c3d14;"><use href="#i-usd"/></svg></div><div class="pl" style="left:280px;width:51px;justify-content:center"><span style="letter-spacing:0.191px;margin-right:-0.191px">Ativo</span></div></div></div></div><div class="col" style="left:1516px"><div class="bar" style="background:#d40000"></div><div class="ct"><span style="letter-spacing:0.809px;margin-right:-0.809px">03 No Shows</span></div><div class="bd g" style="left:356px;top:33px;width:64px;padding-left:9.7px"><svg class="ic" width="24" height="24" style="color:#0b4d10;"><use href="#i-usd"/></svg><span style="margin-left:6.3px"><span style="letter-spacing:1.369px;margin-right:-1.369px">0</span></span></div><div class="bd b" style="left:284px;top:33px;width:63px;padding-left:9.7px"><svg class="ic" width="24" height="24" style="color:#06346a;"><use href="#i-account"/></svg><span style="margin-left:5.3px"><span style="letter-spacing:1.369px;margin-right:-1.369px">4</span></span></div><div class="hr" style="top:89px"></div><div class="list" style="top:114px;height:853px"><div class="card" style="top:4px"><svg class="av"><use href="#avatar"/></svg><div class="ow"><span style="letter-spacing:0.301px;margin-right:-0.301px">Z - Disparo</span><svg class="ic" width="14" height="14" style="color:#21ba45;"><use href="#i-forum"/></svg></div><div class="nm"><span style="letter-spacing:0.464px;margin-right:-0.464px">Nildes Moreira</span></div><svg class="ph" style="left:102px;width:112px" shape-rendering="crispEdges"><use href="#phone"/></svg><div class="pl" style="left:224px;width:39px;padding-left:7.7px"><svg class="ic" width="17" height="17" style="color:#0c3d14;"><use href="#i-usd"/></svg></div><div class="pl" style="left:272px;width:51px;justify-content:center"><span style="letter-spacing:0.191px;margin-right:-0.191px">Ativo</span></div></div><div class="card" style="top:114px"><svg class="av"><use href="#avatar"/></svg><div class="ow"><span style="letter-spacing:0.413px;margin-right:-0.413px">Filipe Andrade</span><svg class="ic" width="14" height="14" style="color:#21ba45;"><use href="#i-forum"/></svg></div><div class="nm"><span style="letter-spacing:0.280px;margin-right:-0.280px">Fernando</span></div><svg class="ph" style="left:102px;width:121px" shape-rendering="crispEdges"><use href="#phone"/></svg><div class="pl" style="left:232px;width:39px;padding-left:7.7px"><svg class="ic" width="17" height="17" style="color:#0c3d14;"><use href="#i-usd"/></svg></div><div class="pl" style="left:280px;width:51px;justify-content:center"><span style="letter-spacing:0.191px;margin-right:-0.191px">Ativo</span></div></div><div class="card" style="top:224px"><svg class="av"><use href="#avatar"/></svg><div class="ow"><span style="letter-spacing:0.216px;margin-right:-0.216px">Sandriny Santana</span><svg class="ic" width="14" height="14" style="color:#21ba45;"><use href="#i-forum"/></svg></div><div class="nm"><span style="letter-spacing:0.152px;margin-right:-0.152px">Fernanda Escudero</span></div><svg class="ph" style="left:102px;width:121px" shape-rendering="crispEdges"><use href="#phone"/></svg><div class="pl" style="left:232px;width:39px;padding-left:7.7px"><svg class="ic" width="17" height="17" style="color:#0c3d14;"><use href="#i-usd"/></svg></div><div class="pl" style="left:280px;width:51px;justify-content:center"><span style="letter-spacing:0.191px;margin-right:-0.191px">Ativo</span></div></div><div class="card" style="top:334px"><svg class="av"><use href="#avatar"/></svg><div class="ow"><span style="letter-spacing:0.405px;margin-right:-0.405px">Randal Villodres</span><svg class="ic" width="14" height="14" style="color:#21ba45;"><use href="#i-forum"/></svg></div><div class="nm"><span style="letter-spacing:0.138px;margin-right:-0.138px">Luciana Menezes</span></div><svg class="ph" style="left:102px;width:121px" shape-rendering="crispEdges"><use href="#phone"/></svg><div class="pl" style="left:232px;width:39px;padding-left:7.7px"><svg class="ic" width="17" height="17" style="color:#0c3d14;"><use href="#i-usd"/></svg></div><div class="pl" style="left:280px;width:51px;justify-content:center"><span style="letter-spacing:0.191px;margin-right:-0.191px">Ativo</span></div></div></div></div>
</div></body></html>
